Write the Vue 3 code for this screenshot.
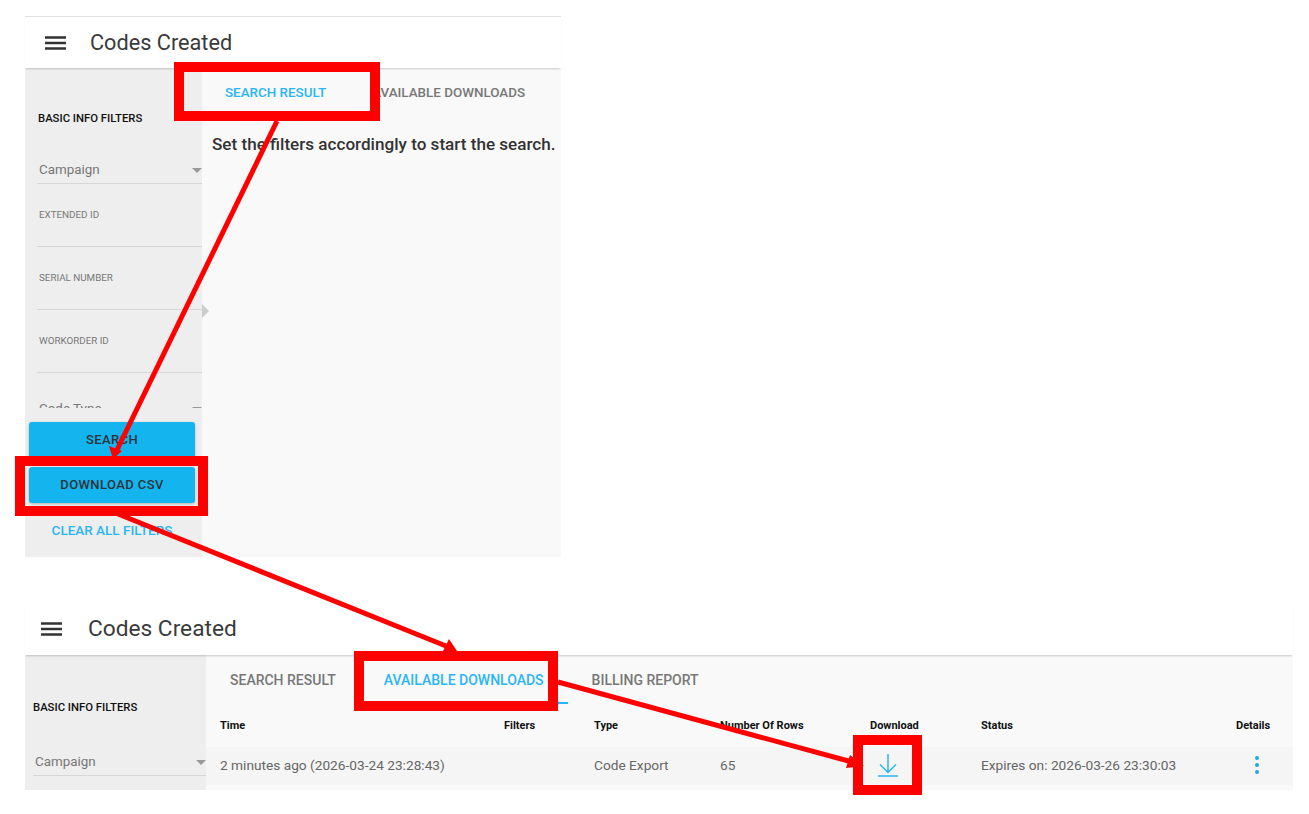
<script setup>
const textFields = ['EXTENDED ID', 'SERIAL NUMBER', 'WORKORDER ID']

const columns = ['Time', 'Filters', 'Type', 'Number Of Rows', 'Download', 'Status', 'Details']

const redBoxes = [
  { x: 179, y: 67, w: 196, h: 49 },
  { x: 20, y: 461, w: 183, h: 50 },
  { x: 359, y: 656, w: 194, h: 50 },
  { x: 858, y: 740, w: 59, h: 50 },
]

const arrows = [
  { x1: 277, y1: 121, x2: 116, y2: 452, head: '113,459 109,446 122,451' },
  { x1: 118, y1: 514, x2: 446, y2: 646, head: '457,651 443,651 449,639' },
  { x1: 558, y1: 682, x2: 852, y2: 762, head: '864,766 846,768 850,755' },
]
</script>

<template>
  <div class="page">
    <section class="panel panel-small">
      <header class="topbar">
        <svg class="menu" viewBox="0 0 21 14"><path d="M0 1.500h21M0 7h21M0 12.500h21" /></svg>
        <h1 class="title">Codes Created</h1>
      </header>
      <div class="body">
        <aside class="sidebar">
          <div class="filters">
            <h2 class="filter-title">BASIC INFO FILTERS</h2>
            <div class="select"><span>Campaign</span><i class="caret"></i></div>
            <label v-for="field in textFields" :key="field" class="field">{{ field }}</label>
            <div class="select"><span>Code Type</span><i class="caret"></i></div>
          </div>
          <div class="actions">
            <button class="btn">SEARCH</button>
            <button class="btn">DOWNLOAD CSV</button>
            <a class="clear">CLEAR ALL FILTERS</a>
          </div>
          <i class="collapse"></i>
        </aside>
        <main class="content">
          <nav class="tabs">
            <span class="tab active">SEARCH RESULT</span>
            <span class="tab">AVAILABLE DOWNLOADS</span>
          </nav>
          <p class="hint">Set the filters accordingly to start the search.</p>
        </main>
      </div>
    </section>

    <section class="panel panel-wide">
      <header class="topbar">
        <svg class="menu" viewBox="0 0 21 14"><path d="M0 1.500h21M0 7h21M0 12.500h21" /></svg>
        <h1 class="title">Codes Created</h1>
      </header>
      <div class="body">
        <aside class="sidebar">
          <h2 class="filter-title">BASIC INFO FILTERS</h2>
          <div class="select"><span>Campaign</span><i class="caret"></i></div>
        </aside>
        <main class="content">
          <nav class="tabs">
            <span class="tab">SEARCH RESULT</span>
            <span class="tab active">AVAILABLE DOWNLOADS</span>
            <span class="tab">BILLING REPORT</span>
          </nav>
          <div class="table-head">
            <span v-for="col in columns" :key="col">{{ col }}</span>
          </div>
          <div class="table-row">
            <span>2 minutes ago (2026-03-24 23:28:43)</span>
            <span></span>
            <span>Code Export</span>
            <span>65</span>
            <span>
              <svg class="download" viewBox="0 0 22 24">
                <path d="M11 1v18M3 11.500l8 8 8-8M1 23h20" />
              </svg>
            </span>
            <span>Expires on: 2026-03-26 23:30:03</span>
            <span class="dots"><i></i><i></i><i></i></span>
          </div>
        </main>
      </div>
    </section>

    <svg class="marks" width="1309" height="814">
      <rect v-for="(box, i) in redBoxes" :key="i" :x="box.x" :y="box.y" :width="box.w" :height="box.h" />
      <g v-for="(arrow, i) in arrows" :key="i">
        <line :x1="arrow.x1" :y1="arrow.y1" :x2="arrow.x2" :y2="arrow.y2" />
        <polygon :points="arrow.head" />
      </g>
    </svg>
  </div>
</template>

<style>
html,
body {
  background: #fff;
  overflow: hidden;
}
</style>

<style scoped>
.page {
  position: relative;
  width: 1309px;
  height: 814px;
  overflow: hidden;
  padding-top: 16px;
  box-sizing: border-box;
  font-family: Roboto, "Liberation Sans", sans-serif;
  color: #333;
}

.panel {
  margin-left: 25px;
}

.panel-small {
  width: 536px;
  border-top: 1px solid #e2e2e2;
}

.panel-wide {
  width: 1268px;
  margin-top: 47px;
}

.topbar {
  display: flex;
  align-items: center;
  height: 51px;
  box-sizing: border-box;
  position: relative;
  z-index: 1;
  box-shadow: 0 2px 2px -1px rgba(0, 0, 0, 0.2);
  background: #fff;
}

.menu {
  width: 21px;
  height: 14px;
  margin-left: 20px;
  fill: none;
  stroke: #333;
  stroke-width: 2.4;
}

.title {
  margin: 0 0 0 24px;
  font-size: 21.700px;
  font-weight: 400;
  color: #3a3a3a;
}

.body {
  display: flex;
  background: #f9f9f9;
}

.sidebar {
  position: relative;
  flex: none;
  display: flex;
  flex-direction: column;
  width: 177px;
  background: #eee;
  box-sizing: border-box;
}

.filters {
  height: 340px;
  flex: none;
  overflow: hidden;
  padding: 44px 0 0 12px;
  box-sizing: border-box;
}

.filter-title {
  margin: 0 0 0 1px;
  font-size: 11.300px;
  line-height: 14px;
  font-weight: 500;
  color: #111;
}

.select {
  position: relative;
  height: 28px;
  margin-top: 30px;
  padding-left: 2px;
  box-sizing: border-box;
  border-bottom: 1px solid #d6d6d6;
  font-size: 13.400px;
  line-height: 28px;
  color: #777;
}

.caret {
  position: absolute;
  right: 0;
  top: 12px;
  border-left: 5px solid transparent;
  border-right: 5px solid transparent;
  border-top: 5px solid #999;
}

.field {
  display: block;
  height: 41px;
  margin-top: 22px;
  padding-left: 2px;
  box-sizing: border-box;
  border-bottom: 1px solid #d6d6d6;
  font-size: 9.800px;
  line-height: 18px;
  color: #777;
}

.filters .field + .select {
  margin-top: 22px;
}

.actions {
  display: flex;
  flex-direction: column;
  padding: 14px 7px 0 4px;
}

.btn {
  height: 36px;
  padding: 0 0 2px;
  border: none;
  border-radius: 3px;
  background: #14b4ef;
  box-shadow: 0 1px 3px rgba(0, 0, 0, 0.25);
  font-family: inherit;
  font-size: 13px;
  font-weight: 500;
  letter-spacing: 0.4px;
  color: #2c3338;
}

.btn + .btn {
  margin-top: 9px;
}

.clear {
  height: 54px;
  line-height: 54px;
  text-align: center;
  font-size: 13.500px;
  font-weight: 500;
  color: #29b6f6;
}

.collapse {
  position: absolute;
  left: 100%;
  top: 236px;
  border-top: 7px solid transparent;
  border-bottom: 7px solid transparent;
  border-left: 7px solid #ccc;
}

.content {
  flex: 1;
  min-width: 0;
}

.tabs {
  display: flex;
  height: 49px;
}

.tab {
  padding: 0 23px;
  box-sizing: border-box;
  height: 49px;
  line-height: 49px;
  font-size: 13.400px;
  font-weight: 500;
  color: #777;
  white-space: nowrap;
}

.tab.active {
  color: #29b6f6;
  border-bottom: 2px solid #29b6f6;
}

.hint {
  margin: 15px 0 0 10px;
  font-size: 17.100px;
  line-height: 24px;
  font-weight: 500;
  color: #333;
  white-space: nowrap;
}

.panel-small .body {
  height: 489px;
}

.panel-wide .topbar {
  padding-bottom: 2px;
}

.panel-wide .topbar .menu {
  margin-left: 16px;
}

.panel-wide .title {
  margin-left: 26px;
  font-size: 22.700px;
}

.panel-wide .body {
  height: 135px;
}

.panel-wide .sidebar {
  width: 181px;
  padding: 46px 0 0 7px;
}

.panel-wide .select {
  margin: 33px 0 0 1px;
  line-height: 27px;
}

.panel-wide .tab {
  padding: 0 24px;
  line-height: 51px;
  font-size: 14px;
}

.table-head,
.table-row {
  display: grid;
  grid-template-columns: 284px 90px 126px 150px 111px 255px 1fr;
  padding-left: 14px;
  align-items: center;
}

.table-head {
  height: 42px;
  margin-bottom: 1px;
  font-size: 11px;
  font-weight: 700;
  color: #111;
}

.table-row {
  height: 38px;
  padding-bottom: 2px;
  box-sizing: border-box;
  background: #f5f5f5;
  font-size: 13.700px;
  color: #666;
}

.download {
  display: block;
  width: 22px;
  height: 24px;
  margin-left: 7px;
  fill: none;
  stroke: #29b6f6;
  stroke-width: 1.5;
}

.dots {
  display: flex;
  flex-direction: column;
  gap: 3px;
  padding-left: 19px;
}

.dots i {
  width: 4px;
  height: 4px;
  border-radius: 50%;
  background: #1fa8e0;
}

.marks {
  position: absolute;
  left: 0;
  top: 0;
  z-index: 2;
  pointer-events: none;
}

.marks rect {
  fill: none;
  stroke: #f00;
  stroke-width: 10;
}

.marks line {
  stroke: #f00;
  stroke-width: 5;
}

.marks polygon {
  fill: #f00;
}
</style>
